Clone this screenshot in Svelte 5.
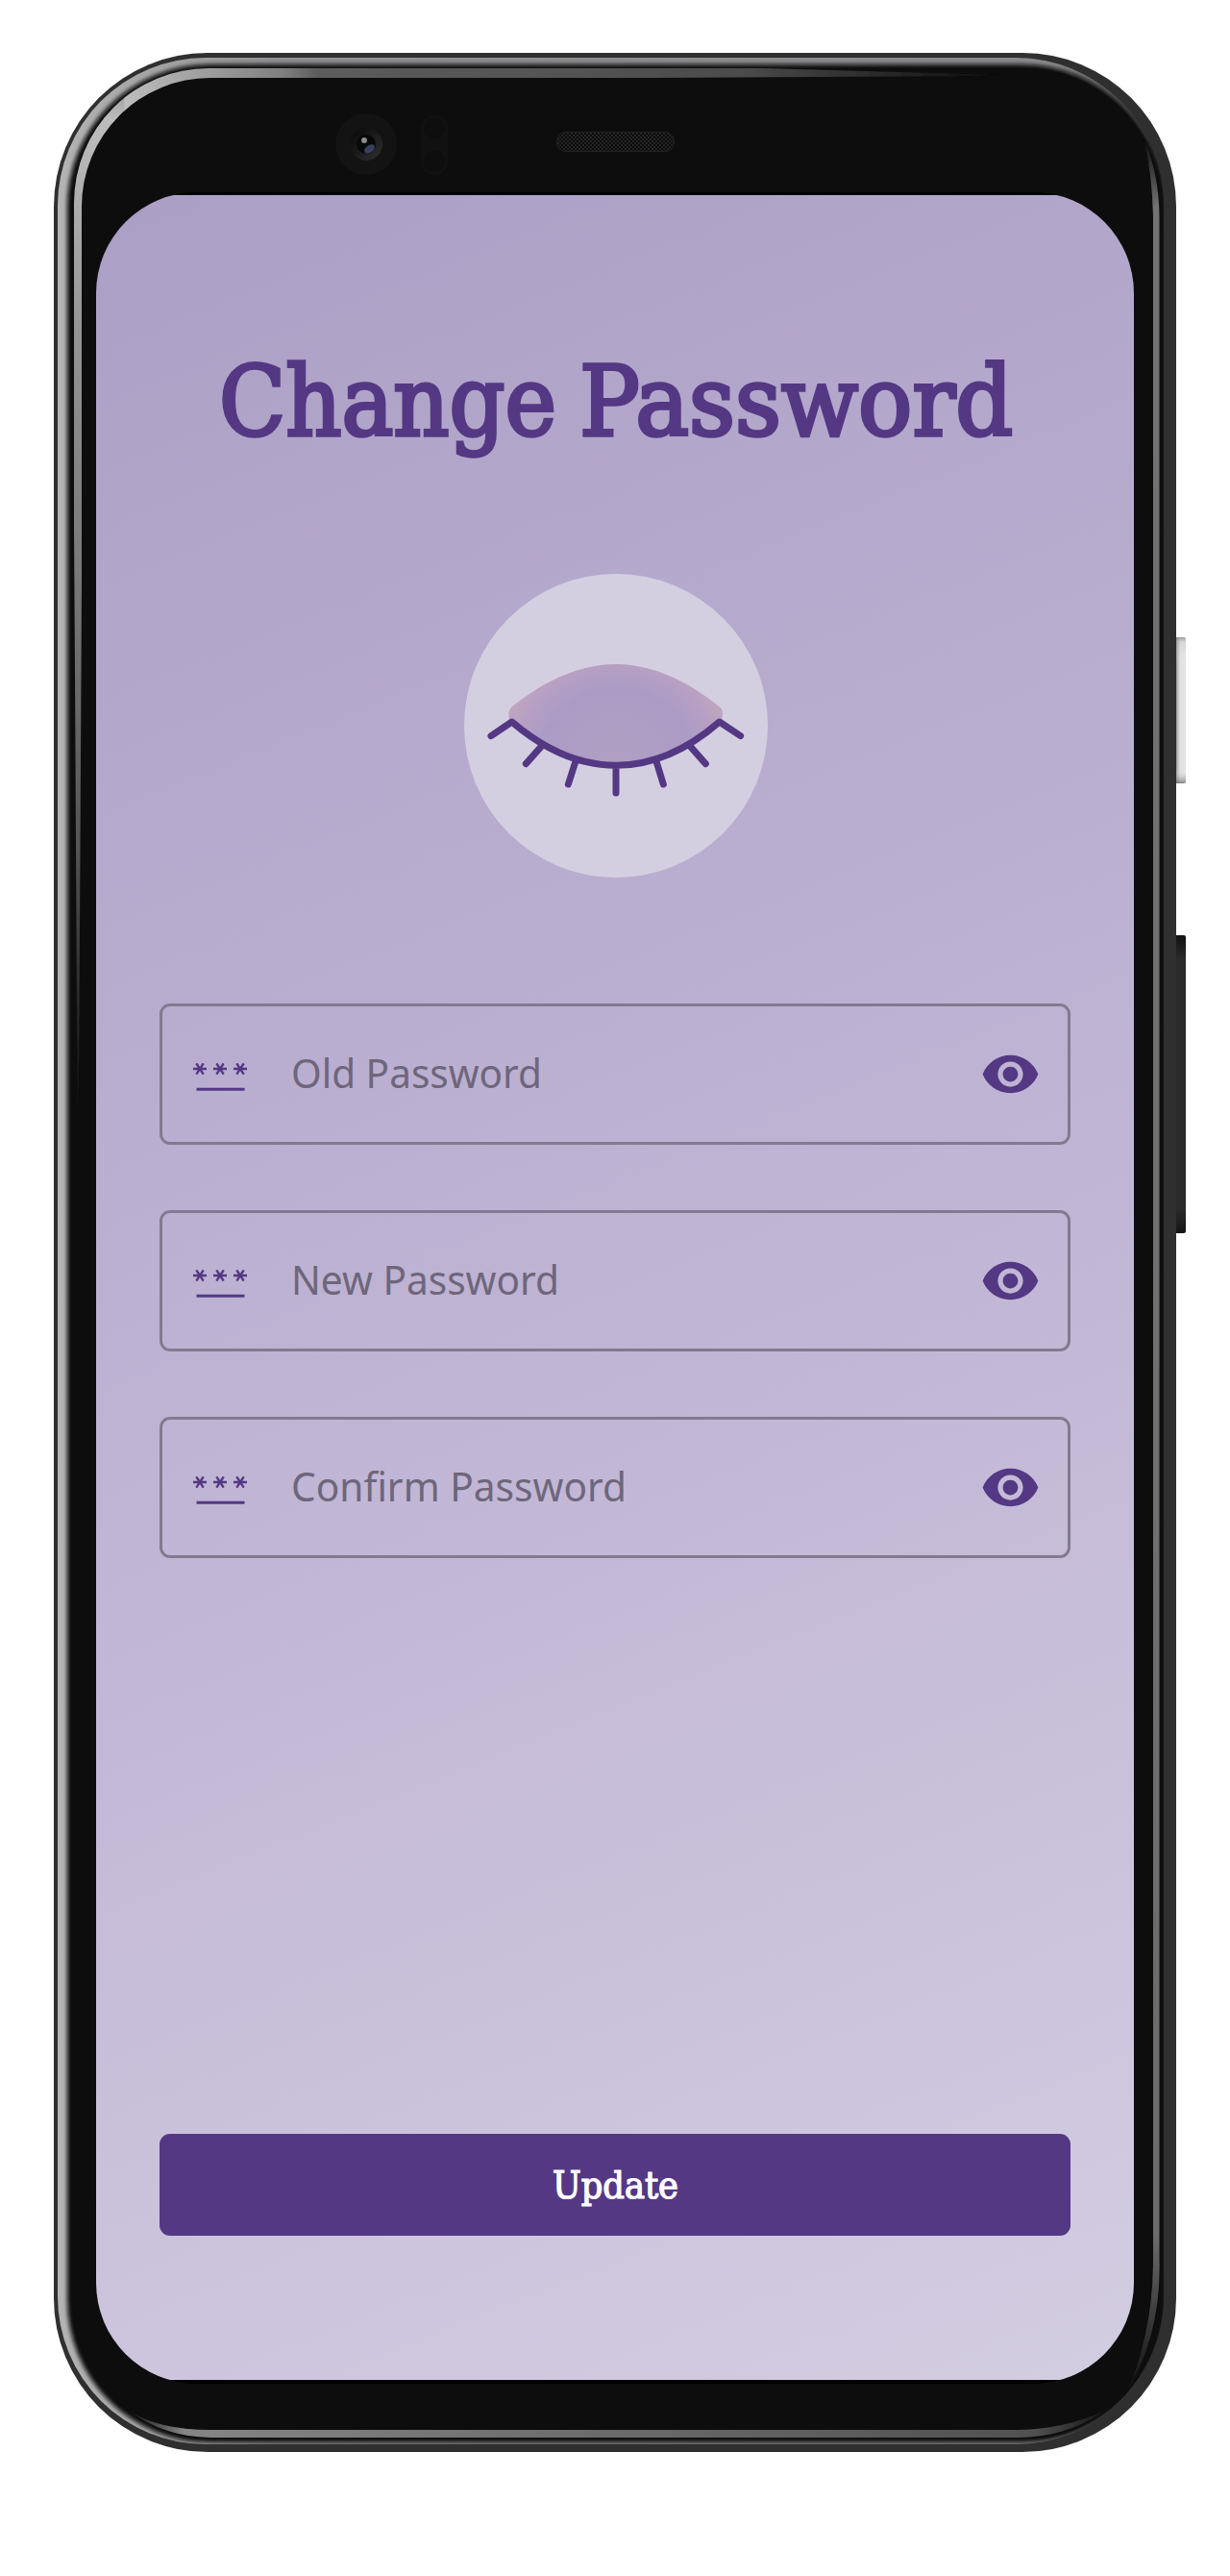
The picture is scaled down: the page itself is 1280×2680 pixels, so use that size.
<script>
  const fields = [
    { id: 'old', label: 'Old Password', width: 261 },
    { id: 'new', label: 'New Password', width: 279 },
    { id: 'confirm', label: 'Confirm Password', width: 349 }
  ];
  const stars = [9, 30, 51];
</script>

<main class="page">
  <svg class="frame" viewBox="0 0 1280 2680" aria-hidden="true">
    <defs>
      <linearGradient id="bevel" x1="0" x2="1" y1="0" y2="0">
        <stop offset="0" stop-color="#b4b4b4" />
        <stop offset=".2" stop-color="#8e8e90" />
        <stop offset=".9" stop-color="#88888a" />
        <stop offset=".98" stop-color="#555" />
        <stop offset="1" stop-color="#181819" />
      </linearGradient>
      <linearGradient id="glowLeft" gradientUnits="userSpaceOnUse" x1="0" x2="0" y1="71" y2="1150">
        <stop offset="0" stop-color="#888" />
        <stop offset=".05" stop-color="#bdbdbd" />
        <stop offset=".25" stop-color="#959595" />
        <stop offset=".5" stop-color="#777" />
        <stop offset=".75" stop-color="#555" />
        <stop offset="1" stop-color="#0d0d0e" />
      </linearGradient>
      <linearGradient id="glowTop" gradientUnits="userSpaceOnUse" x1="130" x2="1040" y1="0" y2="0">
        <stop offset="0" stop-color="#bdbdbd" />
        <stop offset=".18" stop-color="#808080" />
        <stop offset=".22" stop-color="#5c5c5c" />
        <stop offset=".7" stop-color="#4c4c4c" />
        <stop offset="1" stop-color="#0d0d0e" />
      </linearGradient>
      <linearGradient id="glowRight" gradientUnits="userSpaceOnUse" x1="0" x2="0" y1="145" y2="2490">
        <stop offset="0" stop-color="#0d0d0e" />
        <stop offset=".03" stop-color="#727272" />
        <stop offset=".93" stop-color="#6c6c6c" />
        <stop offset="1" stop-color="#0d0d0e" />
      </linearGradient>
      <linearGradient id="glowBottom" gradientUnits="userSpaceOnUse" x1="130" x2="1160" y1="0" y2="0">
        <stop offset="0" stop-color="#0d0d0e" />
        <stop offset=".06" stop-color="#858585" />
        <stop offset=".92" stop-color="#505050" />
        <stop offset="1" stop-color="#0d0d0e" />
      </linearGradient>
      <linearGradient id="power" x1="0" x2="1" y1="0" y2="0">
        <stop offset=".1" stop-color="#8a8a8a" />
        <stop offset=".4" stop-color="#cfcfcf" />
        <stop offset=".5" stop-color="#e2e2e2" />
        <stop offset="1" stop-color="#e4e4e4" />
      </linearGradient>
      <linearGradient id="edgeShade" x1="0" x2="0" y1="0" y2="1">
        <stop offset="0" stop-color="#777" stop-opacity=".7" />
        <stop offset=".03" stop-color="#999" stop-opacity=".2" />
        <stop offset=".2" stop-color="#fff" stop-opacity="0" />
        <stop offset=".9" stop-color="#fff" stop-opacity="0" />
        <stop offset=".98" stop-color="#777" stop-opacity=".5" />
        <stop offset="1" stop-color="#666" stop-opacity=".8" />
      </linearGradient>
      <linearGradient id="lens" x1="0" x2="1" y1="0" y2="1">
        <stop offset=".2" stop-color="#0f0f10" />
        <stop offset="1" stop-color="#303032" />
      </linearGradient>
      <linearGradient id="volume" x1="0" x2="0" y1="0" y2="1">
        <stop offset="0" stop-color="#111" />
        <stop offset=".08" stop-color="#2a2a2a" />
        <stop offset=".92" stop-color="#2a2a2a" />
        <stop offset="1" stop-color="#151515" />
      </linearGradient>
      <pattern id="mesh" width="4" height="4" patternUnits="userSpaceOnUse">
        <rect width="4" height="4" fill="#0c0c0c" />
        <path d="M0 0h2v2H0zM2 2h2v2H2z" fill="#242424" />
      </pattern>
      <filter id="soft" x="-5%" y="-5%" width="110%" height="110%">
        <feGaussianBlur stdDeviation="2" />
      </filter>
      <filter id="fine" x="-5%" y="-5%" width="110%" height="110%">
        <feGaussianBlur stdDeviation=".7" />
      </filter>
      <clipPath id="body"><rect x="60" y="60" width="1151" height="2483" rx="154" /></clipPath>
      <clipPath id="cLeft">
        <path d="M60 60H130V300L86 400L84.500 700L82 1150H80.500L78 700L76 400L60 300Z" />
      </clipPath>
      <clipPath id="cTop"><path d="M129.500 60H400L1045 78V79L500 82L220 220H129.500z" /></clipPath>
      <path
        id="ring"
        fill-rule="evenodd"
        d="M217 71H1066A140 140 0 0 1 1206 211V2396A140 140 0 0 1 1066 2536H217A140 140 0 0 1 77 2396V211A140 140 0 0 1 217 71ZM219 81A134 134 0 0 0 85 215V2394A134 134 0 0 0 219 2528H1066A134 134 0 0 0 1200 2394V215A134 134 0 0 0 1066 81Z"
      />
    </defs>
    <rect x="1222" y="663" width="12" height="152" rx="2" fill="url(#power)" />
    <rect x="1222" y="663" width="12" height="152" rx="2" fill="url(#edgeShade)" />
    <rect x="1222" y="973" width="12" height="310" rx="2" fill="url(#volume)" />
    <rect x="56" y="55" width="1168" height="2496" rx="160" fill="#2f2f2f" />
    <g clip-path="url(#body)">
      <rect x="60" y="60" width="1151" height="2483" fill="url(#bevel)" />
      <rect x="70" y="67" width="1142" height="2474" rx="148" fill="#0d0d0e" filter="url(#soft)" />
      <rect x="76" y="71" width="1132" height="2466" rx="142" fill="#0d0d0e" />
      <g filter="url(#fine)">
        <use href="#ring" fill="url(#glowLeft)" clip-path="url(#cLeft)" />
        <use href="#ring" fill="url(#glowTop)" clip-path="url(#cTop)" />
        <path
          fill="url(#glowRight)"
          d="M1190 143Q1206 180 1206.500 225V2350Q1209 2430 1170 2494Q1200 2430 1200 2350V225Q1199 180 1190 143Z"
        />
        <path
          fill="url(#glowBottom)"
          d="M134 2508Q165 2528 219 2528H1060Q1110 2527 1152 2507Q1110 2536 1060 2536H219Q170 2535 134 2508Z"
        />
      </g>
    </g>
    <circle cx="381" cy="150" r="32" fill="#131313" />
    <circle cx="381" cy="150" r="17" fill="url(#lens)" />
    <circle cx="381" cy="150" r="10" fill="#08080a" />
    <g filter="url(#fine)">
      <ellipse cx="384.500" cy="155" rx="6" ry="3.800" transform="rotate(-35 384.500 155)" fill="#37405e" />
      <circle cx="379" cy="146" r="3" fill="#8a8a8a" />
    </g>
    <rect x="438" y="120" width="28" height="62" rx="14" fill="#111" />
    <circle cx="452" cy="134" r="11" fill="#0e0e0e" />
    <circle cx="452" cy="168" r="11" fill="#0e0e0e" />
    <rect x="579.500" y="137.500" width="122" height="20" rx="9" fill="url(#mesh)" stroke="#222" />
  </svg>

  <section class="screen">
    <form class="content">
      <svg class="title" viewBox="0 0 880 140" role="heading" aria-level="1">
        <text y="92.500">
          <tspan x="28" textLength="351" lengthAdjust="spacingAndGlyphs">Change</tspan>
          <tspan x="403" textLength="451" lengthAdjust="spacingAndGlyphs">Password</tspan>
        </text>
      </svg>

      <svg class="badge" viewBox="69 50 948 948" aria-hidden="true">
        <defs>
          <radialGradient id="lid" gradientUnits="userSpaceOnUse" cx="543" cy="650" r="370">
            <stop offset="0" stop-color="#b19fc3" />
            <stop offset=".45" stop-color="#ad9dc4" />
            <stop offset=".65" stop-color="#ab9cc5" />
            <stop offset=".85" stop-color="#b69fc3" />
            <stop offset="1" stop-color="#bfa5c0" />
          </radialGradient>
        </defs>
        <circle cx="543" cy="524" r="474" fill="#d4cfe0" />
        <path
          fill="url(#lid)"
          d="M218 465C330 375 440 332 543 332S755 375 866 465Q878 475 876 493Q875 505 866 512C760 604 650 648 543 648S326 604 218 512Q208 505 208 490Q208 475 218 465Z"
        />
        <path
          class="lash"
          d="M153 556L218 512C326 604 435 648 543 648S760 604 866 512L932 556M262 643L315 583M394 707L418 632M543 650V734M691 707L668 632M823 643L770 583"
        />
      </svg>

      <div class="fields">
        {#each fields as field (field.id)}
          <div class="field">
            <svg class="stars" viewBox="0 0 60 32" aria-hidden="true">
              {#each stars as x}
                <path d="M{x - 7} 8h14M{x - 3.7} 2.300l7.400 11.400M{x + 3.7} 2.300l-7.400 11.400" />
              {/each}
              <path class="rule" d="M5.500 29.300h50" />
            </svg>
            <svg class="hint" viewBox="0 0 400 60">
              <text x="0" y="44" textLength={field.width} lengthAdjust="spacingAndGlyphs">{field.label}</text>
            </svg>
            <svg class="eye" viewBox="0 0 24 24" aria-hidden="true">
              <path
                d="M12 4.500C7 4.500 2.730 7.610 1 12c1.730 4.390 6 7.500 11 7.500s9.270-3.110 11-7.500c-1.730-4.390-6-7.500-11-7.500zM12 17c-2.760 0-5-2.240-5-5s2.240-5 5-5 5 2.240 5 5-2.240 5-5 5zm0-8c-1.660 0-3 1.340-3 3s1.340 3 3 3 3-1.340 3-3-1.340-3-3-3z"
              />
            </svg>
          </div>
        {/each}
      </div>

      <button class="update" type="button">
        <svg viewBox="0 0 160 60">
          <text x="15" y="44" textLength="131" lengthAdjust="spacingAndGlyphs">Update</text>
        </svg>
      </button>
    </form>
  </section>
</main>

<style>
  :global(body) {
    background: #fff;
  }
  .page {
    display: grid;
    width: 1280px;
    height: 2680px;
  }
  .frame,
  .screen {
    grid-area: 1 / 1;
  }
  .frame {
    width: 1280px;
    height: 2680px;
  }
  .screen {
    width: 1080px;
    height: 2280px;
    margin: 200px 0 0 100px;
    box-sizing: border-box;
    padding: 3px 0 4px;
    background: #000;
    border-radius: 105px;
    overflow: hidden;
    z-index: 1;
  }
  .content {
    display: flex;
    flex-direction: column;
    align-items: center;
    height: 100%;
    box-sizing: border-box;
    padding: 157px 66px 150px;
    background: linear-gradient(158deg, #ab9fc5, #bfb4d4 50%, #d3cde1);
  }
  .title {
    width: 880px;
    height: 140px;
    flex: none;
  }
  .title text {
    font: 101px 'DejaVu Serif Condensed', 'DejaVu Serif', serif;
    fill: #543884;
    stroke: #543884;
    stroke-width: 3.6px;
  }
  .badge {
    width: 316px;
    height: 316px;
    flex: none;
    margin: 97px 0 131px 2px;
  }
  .lash {
    fill: none;
    stroke: #543884;
    stroke-width: 21;
    stroke-linecap: round;
    stroke-linejoin: round;
  }
  .fields {
    display: flex;
    flex-direction: column;
    gap: 68px;
    width: 100%;
  }
  .field {
    display: flex;
    align-items: center;
    box-sizing: border-box;
    height: 147px;
    padding: 0 28px 0 30px;
    border: 3px solid #827a90;
    border-radius: 11px;
  }
  .stars {
    width: 60px;
    height: 32px;
    margin-top: 5px;
    fill: none;
    stroke: #543884;
    stroke-width: 2.4;
  }
  .stars .rule {
    stroke-width: 3;
  }
  .hint {
    width: 400px;
    height: 60px;
    margin-left: 44px;
  }
  .hint text {
    font: 42px 'Noto Sans', sans-serif;
    fill: #6e667b;
  }
  .eye {
    width: 63px;
    height: 63px;
    margin-left: auto;
    fill: #543884;
  }
  .update {
    display: flex;
    justify-content: center;
    align-items: center;
    width: 100%;
    height: 106px;
    margin-top: auto;
    padding: 0;
    border: 0;
    border-radius: 11px;
    background: #543884;
  }
  .update svg {
    width: 160px;
    height: 60px;
  }
  .update text {
    font: 39px 'DejaVu Serif Condensed', 'DejaVu Serif', serif;
    fill: #fff;
    stroke: #fff;
    stroke-width: 1.2px;
  }
</style>
